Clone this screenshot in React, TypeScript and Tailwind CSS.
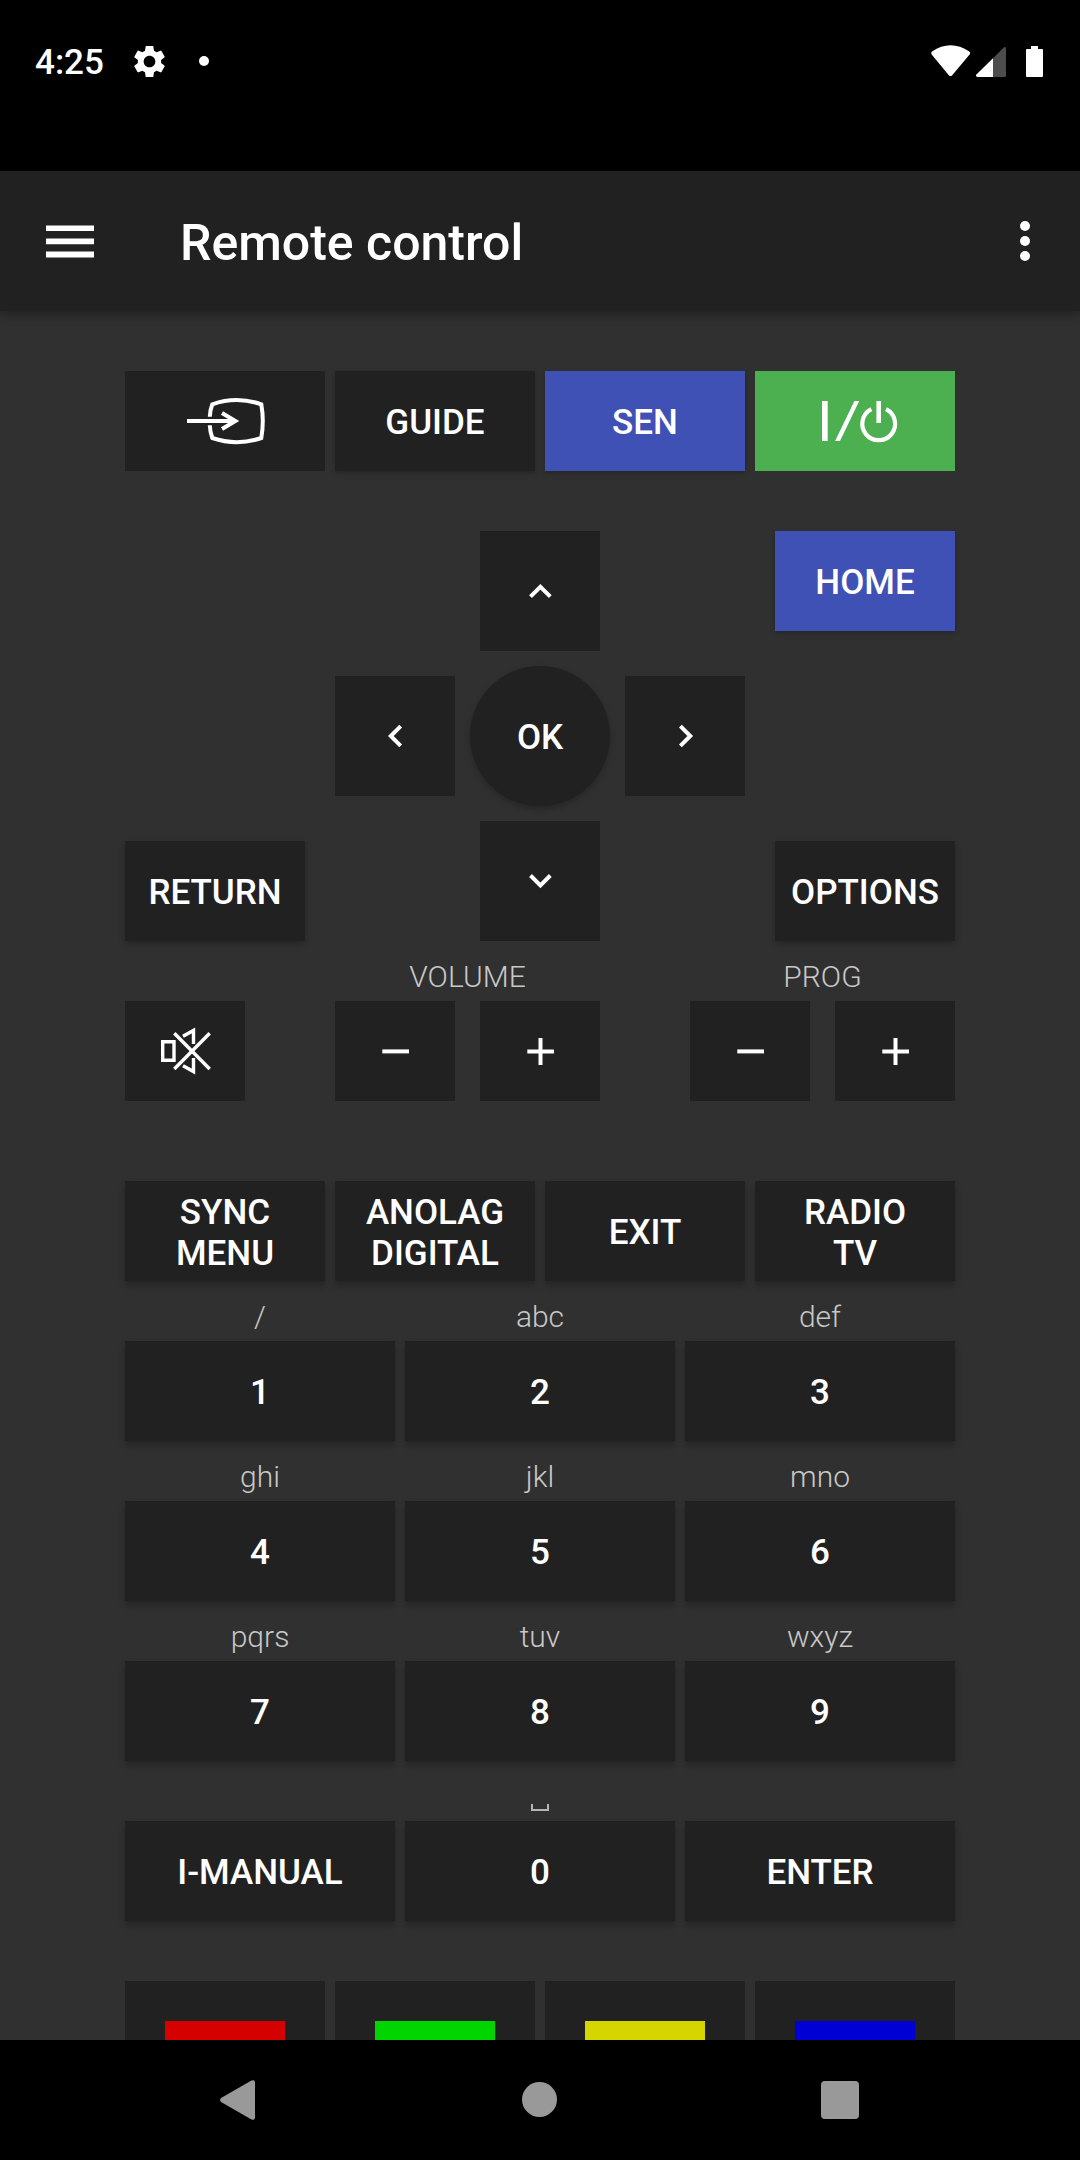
import type { ReactNode } from "react";
import { MdSettings } from "react-icons/md";

const LOW = "shadow-[0_2px_5px_rgba(0,0,0,0.22)]";
const MID = "shadow-[0_3px_6px_rgba(0,0,0,0.22)]";
const HIGH = "shadow-[0_5px_6px_rgba(0,0,0,0.24)]";

function Key({ children, className = "" }: { children?: ReactNode; className?: string }) {
  return (
    <button
      className={`flex items-center justify-center text-center text-[35px] leading-[41px] font-medium whitespace-pre-line text-white ${className}`}
    >
      {children}
    </button>
  );
}

function TextKey({ children, className = "pt-0.5" }: { children: ReactNode; className?: string }) {
  return <Key className={`h-[100px] bg-[#212121] ${className}`}>{children}</Key>;
}

function IconKey({
  d,
  h,
  w = 120,
  className = "bg-[#212121]",
  stroke = 4,
}: {
  d: string;
  h: number;
  w?: number;
  className?: string;
  stroke?: number;
}) {
  return (
    <Key className={className}>
      <svg width={w} height={h} viewBox={`0 0 ${w} ${h}`} fill="none" stroke="#fff" strokeWidth={stroke}>
        <path d={d} />
      </svg>
    </Key>
  );
}

function Label({ children, className = "" }: { children?: ReactNode; className?: string }) {
  return (
    <div
      className={`flex h-[60px] items-center justify-center pt-[11px] text-[30px] leading-none font-light text-[#c8c8c8] ${className}`}
    >
      {children}
    </div>
  );
}

const MINUS = "M47.3 50.4H74";
const PLUS = "M47.3 50.4H74M60.5 37V64";

const digits = [
  ["/", "1"],
  ["abc", "2"],
  ["def", "3"],
  ["ghi", "4"],
  ["jkl", "5"],
  ["mno", "6"],
  ["pqrs", "7"],
  ["tuv", "8"],
  ["wxyz", "9"],
  ["", "I-MANUAL"],
  ["space", "0"],
  ["", "ENTER"],
];

function StatusBar() {
  return (
    <header className="flex h-[171px] shrink-0 items-start justify-between bg-black pr-[37px] pl-[35px] text-white">
      <div className="flex h-[122px] items-center">
        <span className="w-[95px] pt-[3px] text-[35px] leading-none font-medium">4:25</span>
        <MdSettings size={39} />
        <span className="ml-[30px] size-[10px] rounded-full bg-white" />
      </div>
      <svg className="mt-[45px]" width="112" height="33" viewBox="931 45 112 33" fill="#fff">
        <path d="M932 51.5Q950.5 38.8 969.3 51.5Q970.8 53 969.6 54.5L952 75.4Q950.5 76.7 949 75.4L931.7 54.5Q930.8 53 932 51.5Z" />
        <path d="M993 58.3L1004 47.3Q1006 46.2 1006 48.5V76Q1006 77 1005 77H993Z" fill="#4d4d4d" />
        <path d="M993 58.3V77H977.5Q975 76.6 976.4 74.6Z" />
        <path d="M1031 46H1038V49H1042Q1043 49 1043 50V76Q1043 77 1042 77H1027Q1026 77 1026 76V50Q1026 49 1027 49H1031Z" />
      </svg>
    </header>
  );
}

function AppBar() {
  return (
    <div className="z-10 flex h-[140px] shrink-0 items-center bg-[#212121] pr-[50px] pl-[46px] text-white shadow-[0_4px_10px_rgba(0,0,0,0.3)]">
      <svg width="48" height="33" viewBox="0 0 48 33" fill="#fff">
        <path d="M0 0.6H48V6H0ZM0 13.6H48V19.2H0ZM0 26.6H48V32.4H0Z" />
      </svg>
      <h1 className="ml-[86px] flex-1 pt-[4px] text-[50px] leading-none font-medium">Remote control</h1>
      <div className="flex flex-col gap-[5px]">
        <span className="size-[10px] rounded-full bg-white" />
        <span className="size-[10px] rounded-full bg-white" />
        <span className="size-[10px] rounded-full bg-white" />
      </div>
    </div>
  );
}

export default function App() {
  return (
    <div className="flex h-[2160px] w-[1080px] flex-col overflow-hidden bg-[#303030] font-['Roboto',sans-serif]">
      <StatusBar />
      <AppBar />
      <main className="flex min-h-0 flex-1 flex-col overflow-hidden px-[125px] pt-[60px]">
        <div className="grid shrink-0 grid-cols-4 gap-[10px]">
          <IconKey
            w={200}
            h={100}
            d="M62 50H110M97 42L110.4 50L97 58M84.8 45.7Q85 39.5 87.3 33.3Q111.7 24.7 136.3 33.3Q139.3 50 136.3 67Q111.7 75.3 87.3 67Q85 61 84.8 54.3"
          />
          <TextKey className={`pt-0.5 ${LOW}`}>GUIDE</TextKey>
          <Key className={`h-[100px] bg-[#3f51b5] pt-0.5 ${LOW}`}>SEN</Key>
          <Key className="h-[100px] bg-[#4caf50]">
            <svg width="200" height="100" viewBox="0 0 200 100" fill="#fff">
              <path d="M67 30H72.7V70H67ZM99.4 30H104.2L85 70H80.1ZM121.4 30H126V52H121.4Z" />
              <path d="M131 38.1A16.4 16.4 0 1 1 116.4 38.1" fill="none" stroke="#fff" strokeWidth="4.2" />
            </svg>
          </Key>
        </div>

        <div className="mt-[60px] flex h-[410px] shrink-0 gap-[30px]">
          <div className="flex w-[180px] flex-col justify-end">
            <TextKey className={`pt-0.5 ${MID}`}>RETURN</TextKey>
          </div>
          <div className="grid grid-cols-[120px_140px_120px] grid-rows-[120px_140px_120px] place-items-center gap-[15px]">
            <div />
            <IconKey h={120} d="M50.5 65.7L60.4 55.8L70.3 65.7" />
            <div />
            <IconKey h={120} d="M65.7 50.1L55.8 60L65.7 69.9" />
            <Key className={`size-[140px] rounded-full bg-[#212121] pt-0.5 ${MID}`}>OK</Key>
            <IconKey h={120} d="M55.4 50.1L65.3 60L55.4 69.9" />
            <div />
            <IconKey h={120} d="M50.5 54.5L60.4 64.4L70.3 54.5" />
            <div />
          </div>
          <div className="flex w-[180px] flex-col justify-between">
            <Key className={`h-[100px] bg-[#3f51b5] pt-0.5 ${LOW}`}>HOME</Key>
            <TextKey className={`pt-0.5 ${MID}`}>OPTIONS</TextKey>
          </div>
        </div>

        <div className="flex shrink-0 items-end">
          <IconKey
            h={100}
            stroke={3.4}
            d="M37.7 40.7H49V59.3H37.7ZM49.3 32.3L84.7 68M84.7 32.3L49.3 68M58 35.3L68.5 29.4V43M58 64.7L68.5 70.6V57"
          />
          <div className="ml-[90px]">
            <Label>VOLUME</Label>
            <div className="flex gap-[25px]">
              <IconKey h={100} d={MINUS} />
              <IconKey h={100} d={PLUS} />
            </div>
          </div>
          <div className="ml-[90px]">
            <Label>PROG</Label>
            <div className="flex gap-[25px]">
              <IconKey h={100} d={MINUS} />
              <IconKey h={100} d={PLUS} />
            </div>
          </div>
        </div>

        <div className="mt-20 grid shrink-0 grid-cols-4 gap-[10px]">
          <TextKey className={`pt-1 ${HIGH}`}>{"SYNC\nMENU"}</TextKey>
          <TextKey className={`pt-1 ${HIGH}`}>{"ANOLAG\nDIGITAL"}</TextKey>
          <TextKey className={`pt-0.5 ${HIGH}`}>EXIT</TextKey>
          <TextKey className={`pt-1 ${HIGH}`}>{"RADIO\nTV"}</TextKey>
        </div>

        <div className="grid shrink-0 grid-cols-3 gap-x-[10px]">
          {digits.map(([label, key]) => (
            <div key={key} className="flex flex-col">
              <Label>
                {label === "space" ? (
                  <span className="mt-[22px] h-[7px] w-[18px] border-2 border-t-0 border-[#b5b5b5]" />
                ) : (
                  label
                )}
              </Label>
              <TextKey className={`pt-0.5 ${HIGH}`}>{key}</TextKey>
            </div>
          ))}
        </div>

        <div className="mt-[60px] grid shrink-0 grid-cols-4 gap-[10px]">
          <Key className="h-[100px] bg-[#212121]">
            <span className="h-5 w-[120px] bg-[#d50000]" />
          </Key>
          <Key className="h-[100px] bg-[#212121]">
            <span className="h-5 w-[120px] bg-[#00d500]" />
          </Key>
          <Key className="h-[100px] bg-[#212121]">
            <span className="h-5 w-[120px] bg-[#d5d500]" />
          </Key>
          <Key className="h-[100px] bg-[#212121]">
            <span className="h-5 w-[120px] bg-[#0000d5]" />
          </Key>
        </div>
      </main>

      <nav className="z-10 flex h-[120px] shrink-0 items-center justify-between bg-black pr-[221px] pl-[220px]">
        <svg width="35" height="40" viewBox="0 0 35 40" fill="#999">
          <path d="M1 18L31.5 0.6Q35 -0.6 35 2.5V37.5Q35 40.6 31.5 39.4L1 22Q-0.8 20 1 18Z" />
        </svg>
        <span className="mb-px ml-[3px] size-[35px] rounded-full bg-[#999]" />
        <span className="size-[38px] rounded-[4px] bg-[#999]" />
      </nav>
    </div>
  );
}
